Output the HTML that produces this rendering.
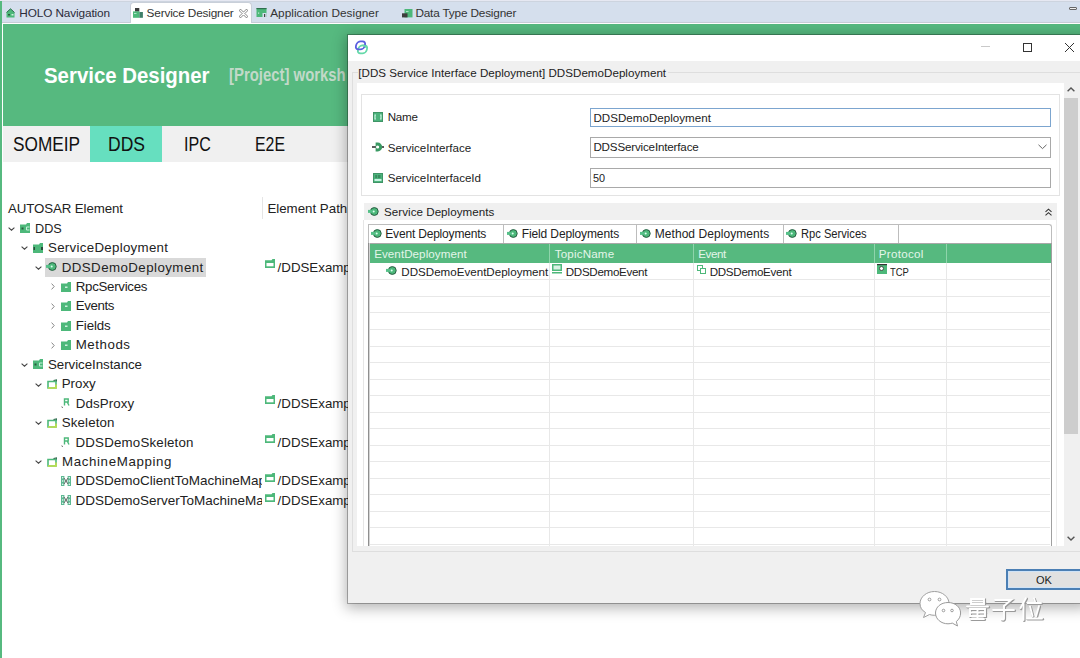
<!DOCTYPE html><html><head><meta charset="utf-8"><style>
html,body{margin:0;padding:0;width:1080px;height:658px;overflow:hidden;background:#fff}
body{position:relative;font-family:"Liberation Sans",sans-serif}
body>div{position:absolute}
.t{white-space:nowrap}
</style></head><body>
<div style="left:0px;top:0px;width:1080px;height:658px;background:#fff"></div>
<div style="left:0px;top:0px;width:1080px;height:23px;background:#d5dfed"></div>
<div style="left:0px;top:0px;width:1080px;height:1px;background:#e6e8f2"></div>
<div style="left:0px;top:1px;width:1080px;height:1px;background:#cdd4df"></div>
<div style="left:0px;top:22px;width:1080px;height:1px;background:#c7ccd6"></div>
<div style="left:130px;top:2px;width:122px;height:21px;background:#fff;border-radius:4px 4px 0 0;border:1px solid #c9cfd9;border-bottom:none;box-sizing:border-box"></div>
<div style="left:131px;top:21px;width:120px;height:3px;background:#fff"></div>
<div style="left:0px;top:1px;width:2px;height:657px;background:#56b97f"></div>
<div style="left:2px;top:23px;width:1px;height:635px;background:#fff"></div>
<div style="left:3px;top:24px;width:1077px;height:102px;background:#56b97f"></div>
<div style="left:3px;top:23px;width:1077px;height:1px;background:#fff"></div>
<div style="left:3px;top:126px;width:1077px;height:36px;background:#f0f0f0"></div>
<div style="left:90px;top:126px;width:72px;height:36px;background:#66dfbf"></div>
<div class="t" style="left:19.25px;top:7.91px;font-size:11.8px;line-height:11.8px;color:#2b2b3a;letter-spacing:-0.112px;">HOLO Navigation</div>
<div class="t" style="left:146.6px;top:7.91px;font-size:11.8px;line-height:11.8px;color:#333;letter-spacing:-0.177px;">Service Designer</div>
<div class="t" style="left:270.2px;top:7.91px;font-size:11.8px;line-height:11.8px;color:#333;letter-spacing:0.025px;">Application Designer</div>
<div class="t" style="left:415.4px;top:7.91px;font-size:11.8px;line-height:11.8px;color:#333;letter-spacing:-0.181px;">Data Type Designer</div>
<div class="t" style="left:43.7px;top:65.35px;font-size:21.8px;line-height:21.8px;color:#ffffff;letter-spacing:0.000px;font-weight:bold;transform:scaleX(0.9355);transform-origin:0 0;">Service Designer</div>
<div class="t" style="left:229.4px;top:67.49px;font-size:17.5px;line-height:17.5px;color:#c2d9c9;letter-spacing:0.000px;font-weight:bold;transform:scaleX(0.8511);transform-origin:0 0;">[Project] worksh</div>
<div class="t" style="left:13px;top:134.69px;font-size:19.5px;line-height:19.5px;color:#111;letter-spacing:0.000px;transform:scaleX(0.8834);transform-origin:0 0;">SOMEIP</div>
<div class="t" style="left:107.5px;top:134.69px;font-size:19.5px;line-height:19.5px;color:#111;letter-spacing:0.000px;transform:scaleX(0.8987);transform-origin:0 0;">DDS</div>
<div class="t" style="left:183.75px;top:134.69px;font-size:19.5px;line-height:19.5px;color:#111;letter-spacing:0.000px;transform:scaleX(0.8229);transform-origin:0 0;">IPC</div>
<div class="t" style="left:254.5px;top:134.69px;font-size:19.5px;line-height:19.5px;color:#111;letter-spacing:0.000px;transform:scaleX(0.8139);transform-origin:0 0;">E2E</div>
<div class="t" style="left:8px;top:201.74px;font-size:13.3px;line-height:13.3px;color:#222;letter-spacing:-0.110px;">AUTOSAR Element</div>
<div style="left:262px;top:197px;width:1px;height:22px;background:#e5e5e5"></div>
<div class="t" style="left:267.4px;top:201.74px;font-size:13.3px;line-height:13.3px;color:#222;letter-spacing:0.000px;">Element Path</div>
<div style="left:45px;top:258px;width:161px;height:19px;background:#d9d9d9"></div>
<div class="t" style="left:34.5px;top:221.64px;font-size:13.3px;line-height:13.3px;color:#222;letter-spacing:0.000px;transform:scaleX(0.9526);transform-origin:0 0;">DDS</div>
<div class="t" style="left:48px;top:241.09px;font-size:13.3px;line-height:13.3px;color:#222;letter-spacing:0.293px;">ServiceDeployment</div>
<div class="t" style="left:61.7px;top:260.54px;font-size:13.3px;line-height:13.3px;color:#222;letter-spacing:0.442px;">DDSDemoDeployment</div>
<div class="t" style="left:75.75px;top:279.99px;font-size:13.3px;line-height:13.3px;color:#222;letter-spacing:-0.290px;">RpcServices</div>
<div class="t" style="left:75.75px;top:299.44px;font-size:13.3px;line-height:13.3px;color:#222;letter-spacing:-0.382px;">Events</div>
<div class="t" style="left:75.75px;top:318.89px;font-size:13.3px;line-height:13.3px;color:#222;letter-spacing:-0.095px;">Fields</div>
<div class="t" style="left:75.75px;top:338.34px;font-size:13.3px;line-height:13.3px;color:#222;letter-spacing:0.540px;">Methods</div>
<div class="t" style="left:48px;top:357.79px;font-size:13.3px;line-height:13.3px;color:#222;letter-spacing:-0.045px;">ServiceInstance</div>
<div class="t" style="left:61.75px;top:377.24px;font-size:13.3px;line-height:13.3px;color:#222;letter-spacing:0.001px;">Proxy</div>
<div class="t" style="left:75.75px;top:396.69px;font-size:13.3px;line-height:13.3px;color:#222;letter-spacing:0.122px;">DdsProxy</div>
<div class="t" style="left:61.75px;top:416.14px;font-size:13.3px;line-height:13.3px;color:#222;letter-spacing:0.142px;">Skeleton</div>
<div class="t" style="left:75.5px;top:435.59px;font-size:13.3px;line-height:13.3px;color:#222;letter-spacing:0.192px;">DDSDemoSkeleton</div>
<div class="t" style="left:62px;top:455.04px;font-size:13.3px;line-height:13.3px;color:#222;letter-spacing:0.631px;">MachineMapping</div>
<div class="t" style="left:75.5px;top:474.32px;font-size:13.5px;line-height:13.5px;color:#222;letter-spacing:0.000px;width:186.5px;overflow:hidden;">DDSDemoClientToMachineMapping</div>
<div class="t" style="left:75.5px;top:493.77px;font-size:13.5px;line-height:13.5px;color:#222;letter-spacing:0.000px;width:186.5px;overflow:hidden;">DDSDemoServerToMachineMapping</div>
<svg style="position:absolute;left:7.5px;top:226.9px;" width="7" height="4" viewBox="0 0 7 4"><path d="M0.6 0.6L3.5 3.2L6.4 0.6" fill="none" stroke="#444" stroke-width="1.1"/></svg>
<svg style="position:absolute;left:20px;top:223px;" width="10" height="10" viewBox="0 0 10 10"><path d="M0 1.5H6L7 0H10V10H0Z" fill="#4db87a"/><rect x="1.5" y="4.5" width="2" height="2" fill="#2a5a3e"/><path d="M9.5 4H6.5V7H9.5" stroke="#c8f0dc" stroke-width="1" fill="none"/></svg>
<svg style="position:absolute;left:21.25px;top:246.35px;" width="7" height="4" viewBox="0 0 7 4"><path d="M0.6 0.6L3.5 3.2L6.4 0.6" fill="none" stroke="#444" stroke-width="1.1"/></svg>
<svg style="position:absolute;left:33px;top:243px;" width="10" height="10" viewBox="0 0 10 10"><path d="M0 1.5H6L7 0H10V10H0Z" fill="#4db87a"/><rect x="0.5" y="4" width="1.5" height="3" fill="#2a4a3a"/><rect x="8" y="4" width="2" height="3" fill="#2a4a3a"/></svg>
<svg style="position:absolute;left:35.0px;top:265.8px;" width="7" height="4" viewBox="0 0 7 4"><path d="M0.6 0.6L3.5 3.2L6.4 0.6" fill="none" stroke="#444" stroke-width="1.1"/></svg>
<svg style="position:absolute;left:46px;top:262px;" width="11" height="10" viewBox="0 0 11 10"><circle cx="6.3" cy="4.5" r="3.9" fill="#4cb87a" stroke="#2b5e44" stroke-width="1"/><rect x="0" y="2.9" width="4.6" height="3" fill="#55c088"/><circle cx="5.7" cy="4.6" r="1" fill="#dcfff0"/></svg>
<svg style="position:absolute;left:265px;top:258px;" width="10" height="10" viewBox="0 0 10 10"><path d="M0 2.3H6.5L7.5 1H10V10H0Z" fill="#4db87a"/><rect x="1.5" y="5" width="7" height="3.3" fill="#fff"/></svg>
<div class="t" style="left:277.6px;top:260.54px;font-size:13.3px;line-height:13.3px;color:#222;letter-spacing:0.000px;">/DDSExample/ServiceDeployment</div>
<svg style="position:absolute;left:50.75px;top:283.25px;" width="4" height="7" viewBox="0 0 4 7"><path d="M0.6 0.6L3.2 3.5L0.6 6.4" fill="none" stroke="#888" stroke-width="1"/></svg>
<svg style="position:absolute;left:61px;top:282px;" width="10" height="10" viewBox="0 0 10 10"><path d="M0 1.5H6L7 0H10V10H0Z" fill="#4db87a"/><rect x="4" y="4.5" width="2.5" height="1.5" fill="#d0f0e0"/></svg>
<svg style="position:absolute;left:50.75px;top:302.7px;" width="4" height="7" viewBox="0 0 4 7"><path d="M0.6 0.6L3.2 3.5L0.6 6.4" fill="none" stroke="#888" stroke-width="1"/></svg>
<svg style="position:absolute;left:61px;top:301px;" width="10" height="10" viewBox="0 0 10 10"><path d="M0 1.5H6L7 0H10V10H0Z" fill="#4db87a"/><rect x="4" y="4.5" width="2.5" height="1.5" fill="#d0f0e0"/></svg>
<svg style="position:absolute;left:50.75px;top:322.15px;" width="4" height="7" viewBox="0 0 4 7"><path d="M0.6 0.6L3.2 3.5L0.6 6.4" fill="none" stroke="#888" stroke-width="1"/></svg>
<svg style="position:absolute;left:61px;top:321px;" width="10" height="10" viewBox="0 0 10 10"><path d="M0 1.5H6L7 0H10V10H0Z" fill="#4db87a"/><rect x="4" y="4.5" width="2.5" height="1.5" fill="#d0f0e0"/></svg>
<svg style="position:absolute;left:50.75px;top:341.6px;" width="4" height="7" viewBox="0 0 4 7"><path d="M0.6 0.6L3.2 3.5L0.6 6.4" fill="none" stroke="#888" stroke-width="1"/></svg>
<svg style="position:absolute;left:61px;top:340px;" width="10" height="10" viewBox="0 0 10 10"><path d="M0 1.5H6L7 0H10V10H0Z" fill="#4db87a"/><rect x="4" y="4.5" width="2.5" height="1.5" fill="#d0f0e0"/></svg>
<svg style="position:absolute;left:21.25px;top:363.05px;" width="7" height="4" viewBox="0 0 7 4"><path d="M0.6 0.6L3.5 3.2L6.4 0.6" fill="none" stroke="#444" stroke-width="1.1"/></svg>
<svg style="position:absolute;left:33px;top:359px;" width="10" height="10" viewBox="0 0 10 10"><path d="M0 1.5H6L7 0H10V10H0Z" fill="#4db87a"/><rect x="1.5" y="4.5" width="2" height="2" fill="#2a5a3e"/><path d="M9.5 4H6.5V7H9.5" stroke="#c8f0dc" stroke-width="1" fill="none"/></svg>
<svg style="position:absolute;left:35.0px;top:382.5px;" width="7" height="4" viewBox="0 0 7 4"><path d="M0.6 0.6L3.5 3.2L6.4 0.6" fill="none" stroke="#444" stroke-width="1.1"/></svg>
<svg style="position:absolute;left:47px;top:379px;" width="10" height="10" viewBox="0 0 10 10"><path d="M1 2.5H9V9H1Z" fill="none" stroke="#4db87a" stroke-width="1.6"/><path d="M1 9H9V5.5" fill="none" stroke="#c2e04a" stroke-width="1.6"/><path d="M6.5 1.5L9.8 0.8V2.5" stroke="#2f6e4e" stroke-width="1.2" fill="none"/></svg>
<svg style="position:absolute;left:61px;top:398px;" width="10" height="10" viewBox="0 0 10 10"><path d="M3.5 7.5V1H7.2V4H3.8M6.5 4.5L8 7.5" fill="none" stroke="#4db87a" stroke-width="1.4"/><path d="M0.8 8.5L1.6 10" stroke="#555" stroke-width="0.9"/></svg>
<svg style="position:absolute;left:265px;top:394px;" width="10" height="10" viewBox="0 0 10 10"><path d="M0 2.3H6.5L7.5 1H10V10H0Z" fill="#4db87a"/><rect x="1.5" y="5" width="7" height="3.3" fill="#fff"/></svg>
<div class="t" style="left:277.6px;top:396.69px;font-size:13.3px;line-height:13.3px;color:#222;letter-spacing:0.000px;">/DDSExample/ServiceDeployment</div>
<svg style="position:absolute;left:35.0px;top:421.4px;" width="7" height="4" viewBox="0 0 7 4"><path d="M0.6 0.6L3.5 3.2L6.4 0.6" fill="none" stroke="#444" stroke-width="1.1"/></svg>
<svg style="position:absolute;left:47px;top:418px;" width="10" height="10" viewBox="0 0 10 10"><path d="M1 2.5H9V9H1Z" fill="none" stroke="#4db87a" stroke-width="1.6"/><path d="M1 9H9V5.5" fill="none" stroke="#c2e04a" stroke-width="1.6"/><path d="M6.5 1.5L9.8 0.8V2.5" stroke="#2f6e4e" stroke-width="1.2" fill="none"/></svg>
<svg style="position:absolute;left:61px;top:437px;" width="10" height="10" viewBox="0 0 10 10"><path d="M3.5 7.5V1H7.2V4H3.8M6.5 4.5L8 7.5" fill="none" stroke="#4db87a" stroke-width="1.4"/><path d="M0.8 8.5L1.6 10" stroke="#555" stroke-width="0.9"/></svg>
<svg style="position:absolute;left:265px;top:433px;" width="10" height="10" viewBox="0 0 10 10"><path d="M0 2.3H6.5L7.5 1H10V10H0Z" fill="#4db87a"/><rect x="1.5" y="5" width="7" height="3.3" fill="#fff"/></svg>
<div class="t" style="left:277.6px;top:435.59px;font-size:13.3px;line-height:13.3px;color:#222;letter-spacing:0.000px;">/DDSExample/ServiceDeployment</div>
<svg style="position:absolute;left:35.0px;top:460.29999999999995px;" width="7" height="4" viewBox="0 0 7 4"><path d="M0.6 0.6L3.5 3.2L6.4 0.6" fill="none" stroke="#444" stroke-width="1.1"/></svg>
<svg style="position:absolute;left:47px;top:457px;" width="10" height="10" viewBox="0 0 10 10"><path d="M1 2.5H9V9H1Z" fill="none" stroke="#4db87a" stroke-width="1.6"/><path d="M1 9H9V5.5" fill="none" stroke="#c2e04a" stroke-width="1.6"/><path d="M6.5 1.5L9.8 0.8V2.5" stroke="#2f6e4e" stroke-width="1.2" fill="none"/></svg>
<svg style="position:absolute;left:61px;top:476px;" width="10" height="10" viewBox="0 0 10 10"><rect x="0" y="0" width="3.4" height="10" fill="#5cb892"/><rect x="6.6" y="0" width="3.4" height="10" fill="#5cb892"/><path d="M3 2L7 8M7 2L3 8" stroke="#555" stroke-width="0.9"/><circle cx="1.7" cy="1.7" r="0.7" fill="#fff"/><circle cx="1.7" cy="5" r="0.7" fill="#fff"/><circle cx="1.7" cy="8.3" r="0.7" fill="#fff"/><circle cx="8.3" cy="1.7" r="0.7" fill="#fff"/><circle cx="8.3" cy="5" r="0.7" fill="#fff"/><circle cx="8.3" cy="8.3" r="0.7" fill="#fff"/></svg>
<svg style="position:absolute;left:265px;top:472px;" width="10" height="10" viewBox="0 0 10 10"><path d="M0 2.3H6.5L7.5 1H10V10H0Z" fill="#4db87a"/><rect x="1.5" y="5" width="7" height="3.3" fill="#fff"/></svg>
<div class="t" style="left:277.6px;top:474.49px;font-size:13.3px;line-height:13.3px;color:#222;letter-spacing:0.000px;">/DDSExample/ServiceDeployment</div>
<svg style="position:absolute;left:61px;top:495px;" width="10" height="10" viewBox="0 0 10 10"><rect x="0" y="0" width="3.4" height="10" fill="#5cb892"/><rect x="6.6" y="0" width="3.4" height="10" fill="#5cb892"/><path d="M3 2L7 8M7 2L3 8" stroke="#555" stroke-width="0.9"/><circle cx="1.7" cy="1.7" r="0.7" fill="#fff"/><circle cx="1.7" cy="5" r="0.7" fill="#fff"/><circle cx="1.7" cy="8.3" r="0.7" fill="#fff"/><circle cx="8.3" cy="1.7" r="0.7" fill="#fff"/><circle cx="8.3" cy="5" r="0.7" fill="#fff"/><circle cx="8.3" cy="8.3" r="0.7" fill="#fff"/></svg>
<svg style="position:absolute;left:265px;top:492px;" width="10" height="10" viewBox="0 0 10 10"><path d="M0 2.3H6.5L7.5 1H10V10H0Z" fill="#4db87a"/><rect x="1.5" y="5" width="7" height="3.3" fill="#fff"/></svg>
<div class="t" style="left:277.6px;top:493.94px;font-size:13.3px;line-height:13.3px;color:#222;letter-spacing:0.000px;">/DDSExample/ServiceDeployment</div>
<svg style="position:absolute;left:6px;top:8px;" width="9" height="10" viewBox="0 0 9 10"><path d="M0.5 4.5L4.5 0.8L8.5 4.5V9.5H0.5Z" fill="#4db87a"/><path d="M0.5 4.5L4.5 0.8L8.5 4.5" fill="none" stroke="#2f6e4e" stroke-width="1"/><rect x="2" y="6" width="2" height="1.5" fill="#2a5a3e"/><rect x="5.5" y="6" width="2" height="1.5" fill="#d0f0e0"/></svg>
<svg style="position:absolute;left:132px;top:8px;" width="11" height="10" viewBox="0 0 11 10"><rect x="3" y="0" width="4.3" height="3.6" fill="#3d3d3d"/><rect x="1" y="3.4" width="6.5" height="6.4" fill="#4db87a"/><rect x="7.4" y="4" width="3.5" height="5.8" fill="#3f7f6a"/><rect x="2" y="5" width="2.5" height="0.8" fill="#c8f0dc"/></svg>
<div style="left:239px;top:9px;width:8px;height:8px;"></div>
<svg style="position:absolute;left:238.5px;top:8.5px;" width="9" height="9" viewBox="0 0 9 9"><path d="M1.5 1.5L7.5 7.5M7.5 1.5L1.5 7.5" stroke="#8a8a8a" stroke-width="2.6" stroke-linecap="round"/><path d="M1.5 1.5L7.5 7.5M7.5 1.5L1.5 7.5" stroke="#fff" stroke-width="1.1" stroke-linecap="round"/></svg>
<svg style="position:absolute;left:255.5px;top:8px;" width="11" height="10" viewBox="0 0 11 10"><rect x="0.5" y="0" width="10" height="9" fill="#4db87a"/><rect x="0.5" y="0" width="10" height="1.2" fill="#2f6e4e"/><rect x="6.5" y="5" width="4" height="4" fill="#d5dfed"/><rect x="8" y="6" width="1.2" height="3" fill="#444"/><rect x="2" y="4.5" width="1.2" height="1.2" fill="#c8f0dc"/></svg>
<svg style="position:absolute;left:401.5px;top:8.5px;" width="11" height="9" viewBox="0 0 11 9"><rect x="2.5" y="0" width="8" height="8.4" fill="#4db87a"/><rect x="0" y="4.3" width="5.5" height="4.1" fill="#3d3d3d"/><rect x="4" y="2" width="2.5" height="0.8" fill="#c8f0dc"/></svg>
<div style="left:1069px;top:7px;width:8px;height:3px;border:1px solid #666;background:#eee;box-sizing:border-box;border-radius:1px"></div>
<div style="left:348px;top:35px;width:738px;height:568px;box-shadow:0 3px 13px 2px rgba(0,0,0,0.30);background:#f0f0f0"></div>
<div style="left:347px;top:34px;width:740px;height:570px;background:#f0f0f0;background-clip:padding-box;border:1px solid rgba(0,0,0,0.27);box-sizing:border-box"></div>
<div style="left:348px;top:35px;width:732px;height:26px;background:#fff"></div>
<svg style="position:absolute;left:350px;top:36px;" width="24" height="22" viewBox="0 0 24 22"><rect x="-4.4" y="-3.9" width="8.8" height="7.9" rx="3.4" transform="translate(12.5 13.3) skewX(-14)" fill="none" stroke="#66d9aa" stroke-width="1.8"/><rect x="-4.4" y="-3.9" width="8.8" height="7.9" rx="3.4" transform="translate(10.5 9.3) skewX(-14)" fill="none" stroke="#5a5fe0" stroke-width="1.8"/><path d="M12.6 9.4Q15.6 9.6 16.4 11.6" fill="none" stroke="#66d9aa" stroke-width="1.8"/></svg>
<div style="left:981px;top:46px;width:9px;height:1px;background:#c9c9c9"></div>
<div style="left:1023px;top:43px;width:9px;height:9px;border:1px solid #333;box-sizing:border-box"></div>
<svg style="position:absolute;left:1064px;top:42px;" width="11" height="11" viewBox="0 0 11 11"><path d="M1 1L10 10M10 1L1 10" stroke="#333" stroke-width="1"/></svg>
<div style="left:352px;top:72px;width:6px;height:1px;background:#dedede"></div>
<div style="left:668px;top:72px;width:412px;height:1px;background:#dedede"></div>
<div style="left:352px;top:72px;width:1px;height:480px;background:#dedede"></div>
<div style="left:352px;top:551px;width:728px;height:1px;background:#dedede"></div>
<div class="t" style="left:358.25px;top:66.68px;font-size:11.6px;line-height:11.6px;color:#222;letter-spacing:0.022px;">[DDS Service Interface Deployment] DDSDemoDeployment</div>
<div style="left:357px;top:83px;width:707px;height:463px;background:#fff"></div>
<div style="left:361px;top:94px;width:699px;height:102px;border:1px solid #e3e3e3;box-sizing:border-box"></div>
<svg style="position:absolute;left:373px;top:112px;" width="10" height="10" viewBox="0 0 10 10"><rect x="0" y="0" width="10" height="10" fill="#4cb37c"/><rect x="0.5" y="0.5" width="9" height="9" fill="none" stroke="#3f9466" stroke-width="1"/><path d="M3 3H2V7H3M7 3H8V7H7" fill="none" stroke="#c6f2e0" stroke-width="1.2"/></svg>
<div class="t" style="left:387.7px;top:111.48px;font-size:11.6px;line-height:11.6px;color:#222;letter-spacing:-0.247px;">Name</div>
<svg style="position:absolute;left:372px;top:142px;" width="12" height="10" viewBox="0 0 12 10"><rect x="0" y="4.2" width="12" height="1.6" fill="#333"/><path d="M3.6 0.6H5.8A4.4 4.4 0 0 1 5.8 9.4H3.6Z" fill="#3a9a63"/><circle cx="5.6" cy="5" r="1.6" fill="#fff"/></svg>
<div class="t" style="left:387.7px;top:141.98px;font-size:11.6px;line-height:11.6px;color:#222;letter-spacing:-0.021px;">ServiceInterface</div>
<svg style="position:absolute;left:373px;top:173px;" width="10" height="10" viewBox="0 0 10 10"><rect x="0" y="0" width="10" height="10" fill="#4cb37c"/><rect x="0.5" y="0.5" width="9" height="9" fill="none" stroke="#3f9466" stroke-width="1"/><rect x="1.5" y="6" width="7" height="2" fill="#c6f2e0"/><rect x="2.2" y="2" width="2" height="3" fill="#3a8a5e"/><rect x="5" y="2" width="2.5" height="3" fill="#3a8a5e"/></svg>
<div class="t" style="left:387.7px;top:172.18px;font-size:11.6px;line-height:11.6px;color:#222;letter-spacing:-0.006px;">ServiceInterfaceId</div>
<div style="left:590px;top:108px;width:461px;height:19px;border:1px solid #7ca5cf;box-sizing:border-box;background:#fff"></div>
<div class="t" style="left:593.4px;top:112.18px;font-size:11.6px;line-height:11.6px;color:#222;letter-spacing:0.017px;">DDSDemoDeployment</div>
<div style="left:590px;top:137px;width:461px;height:21px;border:1px solid #a9a9a9;box-sizing:border-box;background:#fff"></div>
<div class="t" style="left:593.4px;top:141.08px;font-size:11.6px;line-height:11.6px;color:#222;letter-spacing:-0.162px;">DDSServiceInterface</div>
<svg style="position:absolute;left:1038px;top:144px;" width="9" height="6" viewBox="0 0 9 6"><path d="M0.5 0.8L4.5 4.6L8.5 0.8" fill="none" stroke="#666" stroke-width="1"/></svg>
<div style="left:590px;top:168px;width:461px;height:20px;border:1px solid #a9a9a9;box-sizing:border-box;background:#fff"></div>
<div class="t" style="left:593.4px;top:172.18px;font-size:11.6px;line-height:11.6px;color:#222;letter-spacing:0.000px;transform:scaleX(0.9378);transform-origin:0 0;">50</div>
<div style="left:1064px;top:83px;width:14px;height:463px;background:#f0f0f0"></div>
<div style="left:1064px;top:98px;width:14px;height:336px;background:#cdcdcd"></div>
<svg style="position:absolute;left:1066px;top:86px;" width="10" height="7" viewBox="0 0 10 7"><path d="M1.6 5.2L5 1.9L8.4 5.2" fill="none" stroke="#555" stroke-width="1.4"/></svg>
<svg style="position:absolute;left:1066px;top:535px;" width="10" height="7" viewBox="0 0 10 7"><path d="M1.6 1.8L5 5.1L8.4 1.8" fill="none" stroke="#555" stroke-width="1.4"/></svg>
<div style="left:1056px;top:220px;width:1px;height:326px;background:#ececec"></div>
<div style="left:364px;top:203px;width:693px;height:17px;background:#f0f0f0"></div>
<div style="left:363px;top:220px;width:1px;height:326px;background:#e6e6e6"></div>
<svg style="position:absolute;left:368px;top:207px;" width="11" height="10" viewBox="0 0 11 10"><circle cx="6.3" cy="4.5" r="3.9" fill="#4cb87a" stroke="#2b5e44" stroke-width="1"/><rect x="0" y="2.9" width="4.6" height="3" fill="#55c088"/><circle cx="5.7" cy="4.6" r="1" fill="#dcfff0"/></svg>
<div class="t" style="left:384.1px;top:206.38px;font-size:11.6px;line-height:11.6px;color:#222;letter-spacing:0.033px;">Service Deployments</div>
<svg style="position:absolute;left:1044px;top:208px;" width="9" height="9" viewBox="0 0 9 9"><path d="M1.5 3.8L4.5 1.2L7.5 3.8M1.5 7.3L4.5 4.7L7.5 7.3" fill="none" stroke="#333" stroke-width="1.1"/></svg>
<div style="left:368px;top:224px;width:684px;height:322px;border:1px solid #bdbdbd;border-bottom:none;border-radius:0 3px 0 0;box-sizing:border-box;background:#fff"></div>
<div style="left:503px;top:224px;width:1px;height:19px;background:#bdbdbd"></div>
<div style="left:636px;top:224px;width:1px;height:19px;background:#bdbdbd"></div>
<div style="left:783px;top:224px;width:1px;height:19px;background:#bdbdbd"></div>
<div style="left:898px;top:224px;width:1px;height:19px;background:#bdbdbd"></div>
<div style="left:368px;top:243px;width:684px;height:1px;background:#a8a8a8"></div>
<svg style="position:absolute;left:371px;top:229px;" width="11" height="10" viewBox="0 0 11 10"><circle cx="6.3" cy="4.5" r="3.9" fill="#4cb87a" stroke="#2b5e44" stroke-width="1"/><rect x="0" y="2.9" width="4.6" height="3" fill="#55c088"/><circle cx="5.7" cy="4.6" r="1" fill="#dcfff0"/></svg>
<div class="t" style="left:385.3px;top:228.04px;font-size:12px;line-height:12px;color:#222;letter-spacing:-0.191px;">Event Deployments</div>
<svg style="position:absolute;left:507px;top:229px;" width="11" height="10" viewBox="0 0 11 10"><circle cx="6.3" cy="4.5" r="3.9" fill="#4cb87a" stroke="#2b5e44" stroke-width="1"/><rect x="0" y="2.9" width="4.6" height="3" fill="#55c088"/><circle cx="5.7" cy="4.6" r="1" fill="#dcfff0"/></svg>
<div class="t" style="left:521.7px;top:228.04px;font-size:12px;line-height:12px;color:#222;letter-spacing:-0.117px;">Field Deployments</div>
<svg style="position:absolute;left:640px;top:229px;" width="11" height="10" viewBox="0 0 11 10"><circle cx="6.3" cy="4.5" r="3.9" fill="#4cb87a" stroke="#2b5e44" stroke-width="1"/><rect x="0" y="2.9" width="4.6" height="3" fill="#55c088"/><circle cx="5.7" cy="4.6" r="1" fill="#dcfff0"/></svg>
<div class="t" style="left:654.7px;top:228.04px;font-size:12px;line-height:12px;color:#222;letter-spacing:0.065px;">Method Deployments</div>
<svg style="position:absolute;left:786px;top:229px;" width="11" height="10" viewBox="0 0 11 10"><circle cx="6.3" cy="4.5" r="3.9" fill="#4cb87a" stroke="#2b5e44" stroke-width="1"/><rect x="0" y="2.9" width="4.6" height="3" fill="#55c088"/><circle cx="5.7" cy="4.6" r="1" fill="#dcfff0"/></svg>
<div class="t" style="left:801.3px;top:228.04px;font-size:12px;line-height:12px;color:#222;letter-spacing:0.000px;transform:scaleX(0.9294);transform-origin:0 0;">Rpc Services</div>
<div style="left:368px;top:243px;width:1px;height:303px;background:#8f8f8f"></div>
<div style="left:369px;top:243px;width:1px;height:303px;background:#d4d4d4"></div>
<div style="left:370px;top:244px;width:681px;height:19px;background:#56b97f"></div>
<div style="left:549px;top:244px;width:1px;height:19px;background:#8fd4ab"></div>
<div style="left:549px;top:263px;width:1px;height:283px;background:#e8e8e8"></div>
<div style="left:693px;top:244px;width:1px;height:19px;background:#8fd4ab"></div>
<div style="left:693px;top:263px;width:1px;height:283px;background:#e8e8e8"></div>
<div style="left:874px;top:244px;width:1px;height:19px;background:#8fd4ab"></div>
<div style="left:874px;top:263px;width:1px;height:283px;background:#e8e8e8"></div>
<div style="left:946px;top:244px;width:1px;height:19px;background:#8fd4ab"></div>
<div style="left:946px;top:263px;width:1px;height:283px;background:#e8e8e8"></div>
<div style="left:370px;top:279px;width:680px;height:1px;background:#e8e8e8"></div>
<div style="left:370px;top:296px;width:680px;height:1px;background:#e8e8e8"></div>
<div style="left:370px;top:312px;width:680px;height:1px;background:#e8e8e8"></div>
<div style="left:370px;top:329px;width:680px;height:1px;background:#e8e8e8"></div>
<div style="left:370px;top:346px;width:680px;height:1px;background:#e8e8e8"></div>
<div style="left:370px;top:362px;width:680px;height:1px;background:#e8e8e8"></div>
<div style="left:370px;top:379px;width:680px;height:1px;background:#e8e8e8"></div>
<div style="left:370px;top:395px;width:680px;height:1px;background:#e8e8e8"></div>
<div style="left:370px;top:412px;width:680px;height:1px;background:#e8e8e8"></div>
<div style="left:370px;top:428px;width:680px;height:1px;background:#e8e8e8"></div>
<div style="left:370px;top:445px;width:680px;height:1px;background:#e8e8e8"></div>
<div style="left:370px;top:461px;width:680px;height:1px;background:#e8e8e8"></div>
<div style="left:370px;top:478px;width:680px;height:1px;background:#e8e8e8"></div>
<div style="left:370px;top:494px;width:680px;height:1px;background:#e8e8e8"></div>
<div style="left:370px;top:511px;width:680px;height:1px;background:#e8e8e8"></div>
<div style="left:370px;top:527px;width:680px;height:1px;background:#e8e8e8"></div>
<div style="left:370px;top:544px;width:680px;height:1px;background:#e8e8e8"></div>
<div style="left:1051px;top:243px;width:1px;height:303px;background:#a0a0a0"></div>
<div class="t" style="left:374.2px;top:247.98px;font-size:11.6px;line-height:11.6px;color:#e3f6ea;letter-spacing:0.067px;">EventDeployment</div>
<div class="t" style="left:554.7px;top:247.98px;font-size:11.6px;line-height:11.6px;color:#e3f6ea;letter-spacing:0.185px;">TopicName</div>
<div class="t" style="left:698.3px;top:247.98px;font-size:11.6px;line-height:11.6px;color:#e3f6ea;letter-spacing:-0.416px;">Event</div>
<div class="t" style="left:878.7px;top:247.98px;font-size:11.6px;line-height:11.6px;color:#e3f6ea;letter-spacing:0.306px;">Protocol</div>
<svg style="position:absolute;left:386px;top:266px;" width="11" height="10" viewBox="0 0 11 10"><circle cx="6.3" cy="4.5" r="3.9" fill="#4cb87a" stroke="#2b5e44" stroke-width="1"/><rect x="0" y="2.9" width="4.6" height="3" fill="#55c088"/><circle cx="5.7" cy="4.6" r="1" fill="#dcfff0"/></svg>
<div class="t" style="left:401.3px;top:265.88px;font-size:11.6px;line-height:11.6px;color:#222;letter-spacing:0.000px;">DDSDemoEventDeployment</div>
<svg style="position:absolute;left:552px;top:264px;" width="10" height="10" viewBox="0 0 10 10"><rect x="0" y="0" width="10" height="9.5" fill="#4db87a"/><rect x="1.5" y="1.5" width="7" height="4" fill="#d9f2e4"/><rect x="0" y="7" width="10" height="1" fill="#fff"/></svg>
<div class="t" style="left:565.8px;top:265.88px;font-size:11.6px;line-height:11.6px;color:#222;letter-spacing:-0.309px;">DDSDemoEvent</div>
<svg style="position:absolute;left:697px;top:265px;" width="9" height="9" viewBox="0 0 9 9"><rect x="0.5" y="0.5" width="5" height="5" fill="#fff" stroke="#4db87a"/><rect x="3.5" y="3.5" width="5" height="5" fill="#fff" stroke="#4db87a"/></svg>
<div class="t" style="left:709.7px;top:265.88px;font-size:11.6px;line-height:11.6px;color:#222;letter-spacing:-0.282px;">DDSDemoEvent</div>
<svg style="position:absolute;left:877px;top:264px;" width="10" height="10" viewBox="0 0 10 10"><rect x="0" y="0" width="10" height="10" fill="#4db87a"/><rect x="0" y="0" width="10" height="1.2" fill="#333"/><circle cx="4.5" cy="4.5" r="2" fill="#fff" stroke="#333" stroke-width="0.8"/></svg>
<div class="t" style="left:890.3px;top:265.88px;font-size:11.6px;line-height:11.6px;color:#222;letter-spacing:0.000px;transform:scaleX(0.8147);transform-origin:0 0;">TCP</div>
<div style="left:1006px;top:569px;width:80px;height:21px;border:2px solid #4b7fb4;box-sizing:border-box;background:#e1e1e1"></div>
<div style="left:1008px;top:571px;width:76px;height:17px;border:1px solid #cfe3f7;box-sizing:border-box"></div>
<div class="t" style="left:1035.8px;top:574.67px;font-size:11.5px;line-height:11.5px;color:#222;letter-spacing:0.000px;transform:scaleX(0.9569);transform-origin:0 0;">OK</div>
<svg style="position:absolute;left:966px;top:597px;" width="26" height="26" viewBox="0 0 26 26"><g transform="translate(0.8,0.8)" stroke="#9a9a9a" stroke-width="2.6" fill="none" stroke-linecap="round"><path d="M5 2H18V7H5Z"/><path d="M5 4.5H18"/><path d="M1 9.5H22"/><path d="M4 12H19V19H4Z"/><path d="M4 15.5H19"/><path d="M11.5 12V22"/><path d="M5 22H18"/><path d="M6 19.5H17"/></g><g stroke="#fff" stroke-width="1.9" fill="none" stroke-linecap="round"><path d="M5 2H18V7H5Z"/><path d="M5 4.5H18"/><path d="M1 9.5H22"/><path d="M4 12H19V19H4Z"/><path d="M4 15.5H19"/><path d="M11.5 12V22"/><path d="M5 22H18"/><path d="M6 19.5H17"/></g></svg>
<svg style="position:absolute;left:992px;top:597px;" width="26" height="26" viewBox="0 0 26 26"><g transform="translate(0.8,0.8)" stroke="#9a9a9a" stroke-width="2.6" fill="none" stroke-linecap="round"><path d="M3 3H19L12 9"/><path d="M12 9V21.5Q12 23 9.5 22.5"/><path d="M1 13H22"/></g><g stroke="#fff" stroke-width="1.9" fill="none" stroke-linecap="round"><path d="M3 3H19L12 9"/><path d="M12 9V21.5Q12 23 9.5 22.5"/><path d="M1 13H22"/></g></svg>
<svg style="position:absolute;left:1019px;top:597px;" width="26" height="26" viewBox="0 0 26 26"><g transform="translate(0.8,0.8)" stroke="#9a9a9a" stroke-width="2.6" fill="none" stroke-linecap="round"><path d="M7 1L1.5 11"/><path d="M4.5 7V23"/><path d="M15 1.5L16 4.5"/><path d="M8.5 6H22"/><path d="M11 9.5L13.5 19"/><path d="M20 9L17 19.5"/><path d="M8 21.5H23"/></g><g stroke="#fff" stroke-width="1.9" fill="none" stroke-linecap="round"><path d="M7 1L1.5 11"/><path d="M4.5 7V23"/><path d="M15 1.5L16 4.5"/><path d="M8.5 6H22"/><path d="M11 9.5L13.5 19"/><path d="M20 9L17 19.5"/><path d="M8 21.5H23"/></g></svg>
<svg style="position:absolute;left:917px;top:589px;" width="46" height="40" viewBox="0 0 46 40"><g fill="#fff" stroke="#a0a0a0" stroke-width="1"><path d="M17.5 2.5C9.5 2.5 3 8 3 14.5C3 18.5 5 21.5 8.5 23.5L6.5 28.5L12.5 25.5C14 26 15.7 26.3 17.5 26.3C25.5 26.3 32 21 32 14.5C32 8 25.5 2.5 17.5 2.5Z"/></g><g fill="#fff" stroke="#9a9a9a" stroke-width="1"><path d="M31 13.5C24 13.5 18.5 18 18.5 24C18.5 30 24 34.8 31 34.8C32.5 34.8 34 34.5 35.3 34.1L40.5 37L39.3 32.5C42 30.5 43.6 27.5 43.6 24C43.6 18 38 13.5 31 13.5Z"/></g><circle cx="12.5" cy="10.5" r="1.4" fill="#fff" stroke="#888" stroke-width="0.8"/><circle cx="22.5" cy="10.5" r="1.4" fill="#fff" stroke="#888" stroke-width="0.8"/><circle cx="26.5" cy="21.5" r="1.3" fill="#fff" stroke="#888" stroke-width="0.8"/><circle cx="35" cy="21.5" r="1.3" fill="#fff" stroke="#888" stroke-width="0.8"/></svg>
</body></html>
